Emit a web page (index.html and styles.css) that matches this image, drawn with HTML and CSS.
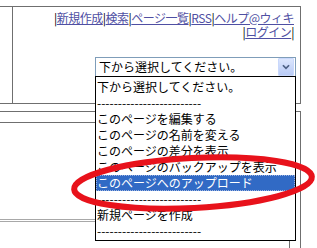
FILE: index.html
```html
<!DOCTYPE html>
<html>
<head>
<meta charset="utf-8">
<title>ページメニュー</title>
<link rel="stylesheet" href="styles.css">
</head>
<body>

<div class="head">
  <div class="side"></div>
  <div class="main">
    <div class="links">
      <div class="line">|<a href="#">新規作成</a>|<a href="#">検索</a>|<a href="#">ページ一覧</a>|<a href="#">RSS</a>|<a href="#">ヘルプ@ウィキ</a></div>
      <div class="line">|<a href="#">ログイン</a>|</div>
    </div>
    <div class="select">
      <span class="current">下から選択してください。</span>
      <span class="arrow">
        <svg width="16" height="16" viewBox="0 0 16 16"><path d="M4.5 6 L8 9.5 L11.5 6" fill="none" stroke="#4d6185" stroke-width="2"/></svg>
      </span>
      <ul class="options">
        <li>下から選択してください。</li>
        <li>-------------------------</li>
        <li>このページを編集する</li>
        <li>このページの名前を変える</li>
        <li>このページの差分を表示</li>
        <li>このページのバックアップを表示</li>
        <li class="hl">このページへのアップロード</li>
        <li>-------------------------</li>
        <li>新規ページを作成</li>
        <li>-------------------------</li>
      </ul>
    </div>
  </div>
</div>

<div class="body">
  <div class="inner">
    <hr class="rule">
  </div>
</div>

<!-- red marker drawn over the screenshot -->
<svg class="mark" width="317" height="248" viewBox="0 0 317 248">
  <ellipse cx="193" cy="183" rx="119" ry="25" transform="rotate(-3 193 183)" fill="none" stroke="#e8121b" stroke-width="6"/>
</svg>

</body>
</html>
```

FILE: styles.css
```css
body {
	margin: 0;
	font-family: "Noto Sans CJK JP", sans-serif;
	font-size: 12px;
	color: #000;
	background: #fff;
	overflow: hidden;
}

.head {
	display: flex;
	box-sizing: border-box;
	width: 301px;
	height: 98px;
	margin-top: 6px;
	border-top: 1px solid #6f6f6f;
	border-right: 1px solid #6f6f6f;
	border-bottom: 1px solid #6f6f6f;
}
.side {
	box-sizing: border-box;
	width: 13px;
	border-right: 1px solid #6f6f6f;
}
.main {
	flex: 1;
	display: flex;
	flex-direction: column;
	padding: 4px 4px 0 0;
}

.links {
	padding-right: 2px;
	letter-spacing: -0.5px;
}
.links .line {
	height: 14px;
	line-height: 14px;
	text-align: right;
	white-space: nowrap;
}
.links a {
	display: inline-block;
	height: 14px;
	line-height: 14px;
	color: #4f4fa3;
	text-decoration: underline;
}

.select {
	position: relative;
	display: flex;
	box-sizing: border-box;
	width: 201px;
	height: 20px;
	margin: 18px 0 0 auto;
	border: 1px solid #7f9db9;
	background: #fff;
}
.current {
	flex: 1;
	padding-left: 3px;
	line-height: 18px;
}
.arrow {
	display: flex;
	align-items: center;
	justify-content: center;
	box-sizing: border-box;
	width: 16px;
	margin-right: 1px;
	border: 1px solid #c9d8fc;
	border-radius: 1px;
	background: linear-gradient(to bottom, #dce6fd, #b9cbf6);
}

.options {
	position: absolute;
	top: 100%;
	left: -1px;
	box-sizing: border-box;
	width: 201px;
	margin: 0;
	padding: 2px 0 1px 0;
	list-style: none;
	border: 1px solid #000;
	background: #fff;
	z-index: 2;
}
.options li {
	box-sizing: border-box;
	height: 16px;
	line-height: 16px;
	padding-left: 1px;
	white-space: nowrap;
	overflow: hidden;
}
.options li.hl {
	background: #316ac5;
	color: #fff;
	outline: 1px dotted #9db4e0;
	outline-offset: -1px;
}

.body {
	box-sizing: border-box;
	width: 301px;
	height: 137px;
	margin-top: 7px;
	border-top: 1px solid #6f6f6f;
	border-right: 1px solid #6f6f6f;
	padding-top: 10px;
}
.inner {
	box-sizing: border-box;
	width: 290px;
	height: 126px;
	border-top: 1px solid #6f6f6f;
	border-right: 1px solid #6f6f6f;
}
.rule {
	height: 1px;
	margin: 96px 0 0 0;
	border: none;
	border-top: 1px solid #a8a8a8;
	border-bottom: 1px solid #a8a8a8;
}

.mark {
	position: absolute;
	top: 0;
	left: 0;
	pointer-events: none;
	z-index: 3;
}
```
